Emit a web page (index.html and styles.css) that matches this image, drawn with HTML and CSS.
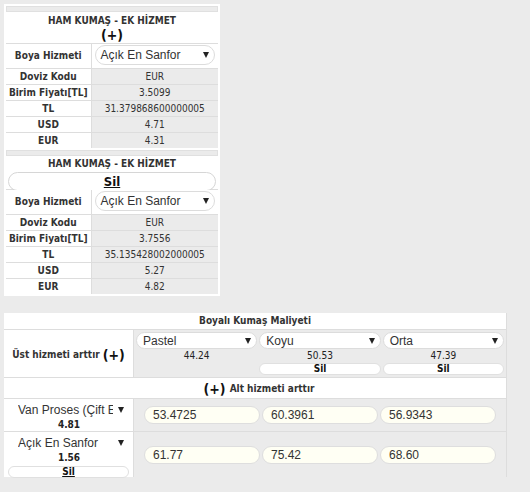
FILE: index.html
```html
<!DOCTYPE html>
<html>
<head>
<meta charset="utf-8">
<link rel="stylesheet" href="styles.css">
</head>
<body>
<div class="page">
  <div class="side">
    <div class="block">
      <div class="band"></div>
      <div class="head">
        <div class="title">HAM KUMAŞ - EK HİZMET</div>
        <div class="plus">(+)</div>
      </div>
      <table class="info">
        <tr class="sel-row"><th>Boya Hizmeti</th><td><div class="select"><span class="stext">Açık En Sanfor</span><span class="arr"></span></div></td></tr>
        <tr><th>Doviz Kodu</th><td>EUR</td></tr>
        <tr><th>Birim Fiyatı[TL]</th><td>3.5099</td></tr>
        <tr><th>TL</th><td>31.379868600000005</td></tr>
        <tr><th>USD</th><td>4.71</td></tr>
        <tr><th>EUR</th><td>4.31</td></tr>
      </table>
    </div>
    <div class="block">
      <div class="band"></div>
      <div class="head head-sil">
        <div class="title">HAM KUMAŞ - EK HİZMET</div>
        <div class="pill big"><u>Sil</u></div>
      </div>
      <table class="info">
        <tr class="sel-row"><th>Boya Hizmeti</th><td><div class="select"><span class="stext">Açık En Sanfor</span><span class="arr"></span></div></td></tr>
        <tr><th>Doviz Kodu</th><td>EUR</td></tr>
        <tr><th>Birim Fiyatı[TL]</th><td>3.7556</td></tr>
        <tr><th>TL</th><td>35.135428002000005</td></tr>
        <tr><th>USD</th><td>5.27</td></tr>
        <tr><th>EUR</th><td>4.82</td></tr>
      </table>
    </div>
  </div>

  <div class="cost">
    <div class="cost-title">Boyalı Kumaş Maliyeti</div>
    <div class="crow r-top">
      <div class="lcell">Üst hizmeti arttır <span class="plus-in">(+)</span></div>
      <div class="rcell cols">
        <div class="col">
          <div class="select sm"><span class="stext">Pastel</span><span class="arr"></span></div>
          <div class="num">44.24</div>
        </div>
        <div class="col">
          <div class="select sm"><span class="stext">Koyu</span><span class="arr"></span></div>
          <div class="num">50.53</div>
          <div class="pill small">Sil</div>
        </div>
        <div class="col">
          <div class="select sm"><span class="stext">Orta</span><span class="arr"></span></div>
          <div class="num">47.39</div>
          <div class="pill small">Sil</div>
        </div>
      </div>
    </div>
    <div class="crow r-add"><span class="plus-in">(+)</span> Alt hizmeti arttır</div>
    <div class="crow r-svc1">
      <div class="lcell svc">
        <div class="select plain"><span class="stext clip">Van Proses (Çift En)</span><span class="arr"></span></div>
        <div class="num b">4.81</div>
      </div>
      <div class="rcell inputs">
        <div class="inp">53.4725</div>
        <div class="inp">60.3961</div>
        <div class="inp">56.9343</div>
      </div>
    </div>
    <div class="crow r-svc2">
      <div class="lcell svc">
        <div class="select plain"><span class="stext clip">Açık En Sanfor</span><span class="arr"></span></div>
        <div class="num b">1.56</div>
        <div class="pill small wide"><u>Sil</u></div>
      </div>
      <div class="rcell inputs">
        <div class="inp">61.77</div>
        <div class="inp">75.42</div>
        <div class="inp">68.60</div>
      </div>
    </div>
  </div>
</div>
</body>
</html>
```

FILE: styles.css
```css
* { box-sizing: border-box; }
body {
  margin: 0;
  background: #ebebeb;
  font-family: "DejaVu Sans Condensed", "DejaVu Sans", sans-serif;
  font-stretch: condensed;
  font-size: 10px;
  color: #333;
}
.page { padding: 4px; }

.side {
  width: 216px;
  background: #fff;
  padding: 2px 2px 2px 2px;
}
.block + .block { margin-top: 2px; }
.band {
  height: 6px;
  background: #ebebeb;
  border: 1px solid #e0e0e0;
}
.head {
  height: 32px;
  text-align: center;
  border-bottom: 1px solid #ddd;
  padding-top: 3px;
}
.head-sil { height: 34px; padding-top: 2px; }
.title { font-weight: bold; line-height: 12px; }
.plus {
  font-weight: bold;
  font-size: 14px;
  line-height: 16px;
  color: #111;
}
.pill {
  border: 1px solid #d6d6d6;
  border-radius: 10px;
  background: #fff;
  text-align: center;
  font-weight: bold;
  color: #111;
}
.pill.big {
  margin: 2px 2px 0 2px;
  height: 19px;
  font-size: 13px;
  line-height: 17px;
}

.info { width: 100%; border-collapse: collapse; }
.info th {
  width: 85px;
  height: 16px;
  padding: 0;
  font-weight: bold;
  text-align: center;
  background: #fff;
  border-bottom: 1px solid #ddd;
  border-right: 1px solid #ddd;
  white-space: nowrap;
}
.info td {
  padding: 0;
  text-align: center;
  background: #ebebeb;
  border-bottom: 1px solid #ddd;
}
.info tr:last-child th, .info tr:last-child td { border-bottom: none; }
.info .sel-row th { height: 24px; }
.info .sel-row td { background: #fff; padding: 1px 3px 2px 3px; }

.select {
  display: flex;
  justify-content: space-between;
  align-items: center;
  height: 20px;
  border: 1px solid #dcdcdc;
  border-radius: 10px;
  background: #fff;
  padding: 0 5px 0 5px;
  font-family: "Liberation Sans", Arial, sans-serif;
  font-stretch: normal;
  font-size: 12px;
  color: #333;
  text-align: left;
}
.arr {
  width: 0;
  height: 0;
  border-left: 3.5px solid transparent;
  border-right: 3.5px solid transparent;
  border-top: 6px solid #222;
  flex: none;
}

.cost {
  width: 503px;
  margin-top: 17px;
  background: #fff;
  border-right: 1px solid #ddd;
}
.cost-title {
  height: 17px;
  line-height: 16px;
  text-align: center;
  font-weight: bold;
  border-bottom: 1px solid #ddd;
}
.crow {
  display: flex;
  border-bottom: 1px solid #ddd;
}
.crow:last-child { border-bottom: none; }
.lcell {
  width: 130px;
  flex: none;
  background: #fff;
  border-right: 1px solid #ddd;
}
.rcell {
  flex: 1;
  background: #ebebeb;
}
.r-top { height: 48px; }
.r-top .lcell {
  display: flex;
  align-items: center;
  justify-content: center;
  font-weight: bold;
  padding-top: 2px;
}
.plus-in {
  font-size: 14px;
  font-weight: bold;
  color: #111;
  margin-left: 3px;
}
.cols {
  display: grid;
  grid-template-columns: 1fr 1fr 1fr;
  gap: 2px;
  padding: 2px 2px 0 2px;
}
.select.sm { height: 17px; padding: 0 5px 0 6px; }
.num {
  text-align: center;
  line-height: 12px;
  margin-top: 1px;
  color: #222;
}
.num.b { font-weight: bold; }
.pill.small {
  height: 12px;
  font-size: 10px;
  line-height: 10px;
  margin-top: 1px;
  border-color: #e0e0e0;
}
.r-add {
  height: 21px;
  align-items: center;
  justify-content: center;
  font-weight: bold;
  padding-left: 8px;
  padding-top: 1px;
}
.r-add .plus-in { margin: 0 4px 0 0; }
.r-svc1 { height: 33px; }
.r-svc2 { height: 45px; border-bottom: none; }
.svc { padding: 3px 3px 0 4px; }
.select.plain {
  border: none;
  height: 16px;
  padding: 0 6px 0 10px;
}
.clip {
  display: block;
  width: 95px;
  overflow: hidden;
  white-space: nowrap;
}
.pill.wide { margin: 2px 1px 0 0; text-decoration: none; }
.inputs {
  display: flex;
  justify-content: center;
  align-items: center;
  gap: 2px;
}
.inp {
  width: 116px;
  height: 18px;
  border: 1px solid #dedede;
  border-radius: 9px;
  background: #fffff4;
  font-family: "Liberation Sans", Arial, sans-serif;
  font-stretch: normal;
  font-size: 12px;
  line-height: 16px;
  padding-left: 8px;
  color: #333;
}
```
